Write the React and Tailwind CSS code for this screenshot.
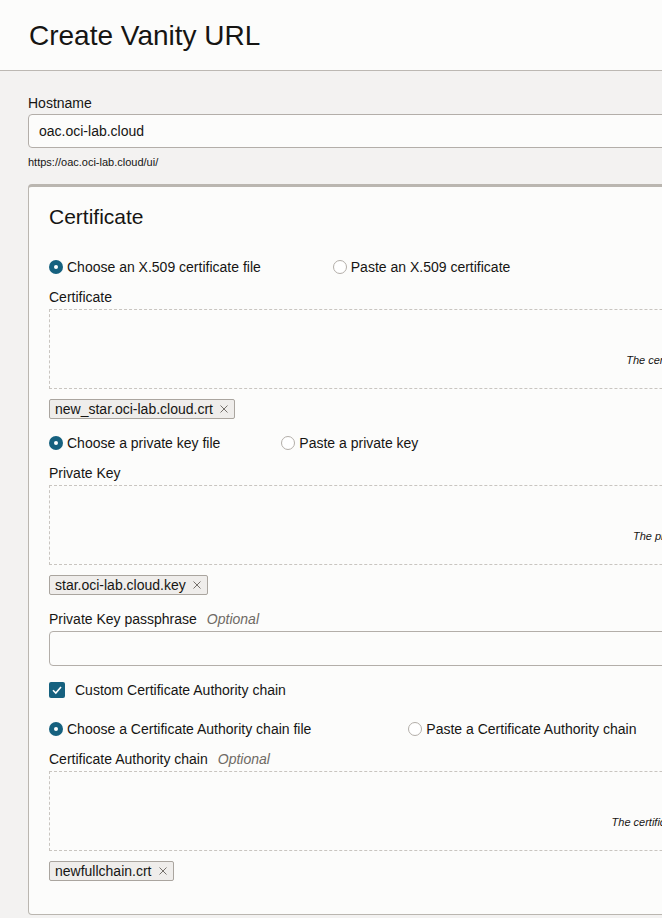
const font = { fontFamily: '"Liberation Sans", Arial, sans-serif' };

const Radio = ({ checked, label }) => (
  <label className="flex items-center gap-[4px] h-[20px] text-[14px] text-[#161513] whitespace-nowrap">
    {checked ? (
      <span className="w-[14px] h-[14px] rounded-full bg-[#16617f] flex items-center justify-center">
        <span className="w-[4px] h-[4px] rounded-full bg-white" />
      </span>
    ) : (
      <span className="w-[14px] h-[14px] rounded-full border border-[#b3aea9] bg-white" />
    )}
    {label}
  </label>
);

const Chip = ({ name }) => (
  <div className="flex">
    <span className="inline-flex items-center h-[20px] pl-[5px] pr-[6px] gap-[7px] rounded-[2px] border border-[#aaa59f] bg-[#efedeb] text-[14px] text-[#161513] whitespace-nowrap">
      {name}
      <svg width="8" height="8" viewBox="0 0 8 8" className="text-[#75706b]">
        <path d="M0.5 0.5 L7.5 7.5 M7.5 0.5 L0.5 7.5" stroke="currentColor" strokeWidth="1" />
      </svg>
    </span>
  </div>
);

// drop target, centred text runs past the visible edge
const Dropzone = ({ text }) => (
  <div className="mt-[2px] w-[1289px] h-[80px] border border-dashed border-[#c9c5c0] flex justify-center pt-[43px]">
    <span className="italic text-[11px] leading-[14px] text-[#161513] whitespace-nowrap">{text}</span>
  </div>
);

const Label = ({ children, optional }) => (
  <div className="h-[20px] flex items-center text-[14px] text-[#161513] whitespace-nowrap">
    {children}
    {optional && <span className="ml-[10px] italic text-[#6f6a65]">Optional</span>}
  </div>
);

export default function App() {
  return (
    <div style={font} className="w-full h-[918px] overflow-hidden bg-[#f3f2f1] text-[#161513]">
      <div className="w-[1400px]">
        {/* Header */}
        <div className="h-[71px] bg-[#fcfcfb] border-b border-[#bcb8b3] flex items-center pl-[29px] pt-[1px]">
          <h1 className="text-[28px] leading-[34px]">Create Vanity URL</h1>
        </div>

        <div className="pl-[28px] pt-[22px]">
          {/* Hostname */}
          <div className="text-[14px] leading-[20px]">Hostname</div>
          <div className="mt-[1px] w-[1331px] h-[34px] rounded-[4px] border border-[#b3aea9] bg-[#fcfcfb] flex items-center pl-[10px] text-[14px]">
            oac.oci-lab.cloud
          </div>
          <div className="mt-[6px] text-[11px] leading-[16px]">https://oac.oci-lab.cloud/ui/</div>

          {/* Certificate card */}
          <div className="mt-[14px] w-[1331px] bg-[#fcfcfb] border border-t-[3px] border-[#bab6b0] rounded-[4px] px-[20px] pt-[16px] pb-[33px]">
            <h2 className="text-[21px] leading-[28px]">Certificate</h2>

            <div className="mt-[26px] flex gap-[72px]">
              <Radio checked label="Choose an X.509 certificate file" />
              <Radio label="Paste an X.509 certificate" />
            </div>
            <div className="mt-[10px]">
              <Label>Certificate</Label>
            </div>
            <Dropzone text="The certificate file to upload" />
            <div className="mt-[10px]">
              <Chip name="new_star.oci-lab.cloud.crt" />
            </div>

            <div className="mt-[14px] flex gap-[61px]">
              <Radio checked label="Choose a private key file" />
              <Radio label="Paste a private key" />
            </div>
            <div className="mt-[10px]">
              <Label>Private Key</Label>
            </div>
            <Dropzone text="The private key to import" />
            <div className="mt-[10px]">
              <Chip name="star.oci-lab.cloud.key" />
            </div>

            <div className="mt-[14px]">
              <Label optional>Private Key passphrase</Label>
            </div>
            <div className="mt-[2px] w-full h-[35px] rounded-[4px] border border-[#b3aea9] bg-[#fcfcfb]" />

            <label className="mt-[14px] flex items-center gap-[10px] h-[20px] text-[14px] whitespace-nowrap">
              <span className="w-[16px] h-[16px] rounded-[2px] bg-[#16617f] flex items-center justify-center">
                <svg width="12" height="12" viewBox="0 0 12 12">
                  <path d="M2 6.2 L4.8 9 L10 3" fill="none" stroke="white" strokeWidth="1.6" />
                </svg>
              </span>
              Custom Certificate Authority chain
            </label>

            <div className="mt-[19px] flex gap-[97px]">
              <Radio checked label="Choose a Certificate Authority chain file" />
              <Radio label="Paste a Certificate Authority chain" />
            </div>
            <div className="mt-[10px]">
              <Label optional>Certificate Authority chain</Label>
            </div>
            <Dropzone text="The certificate chain file to upload" />
            <div className="mt-[10px]">
              <Chip name="newfullchain.crt" />
            </div>
          </div>
        </div>
      </div>
    </div>
  );
}
